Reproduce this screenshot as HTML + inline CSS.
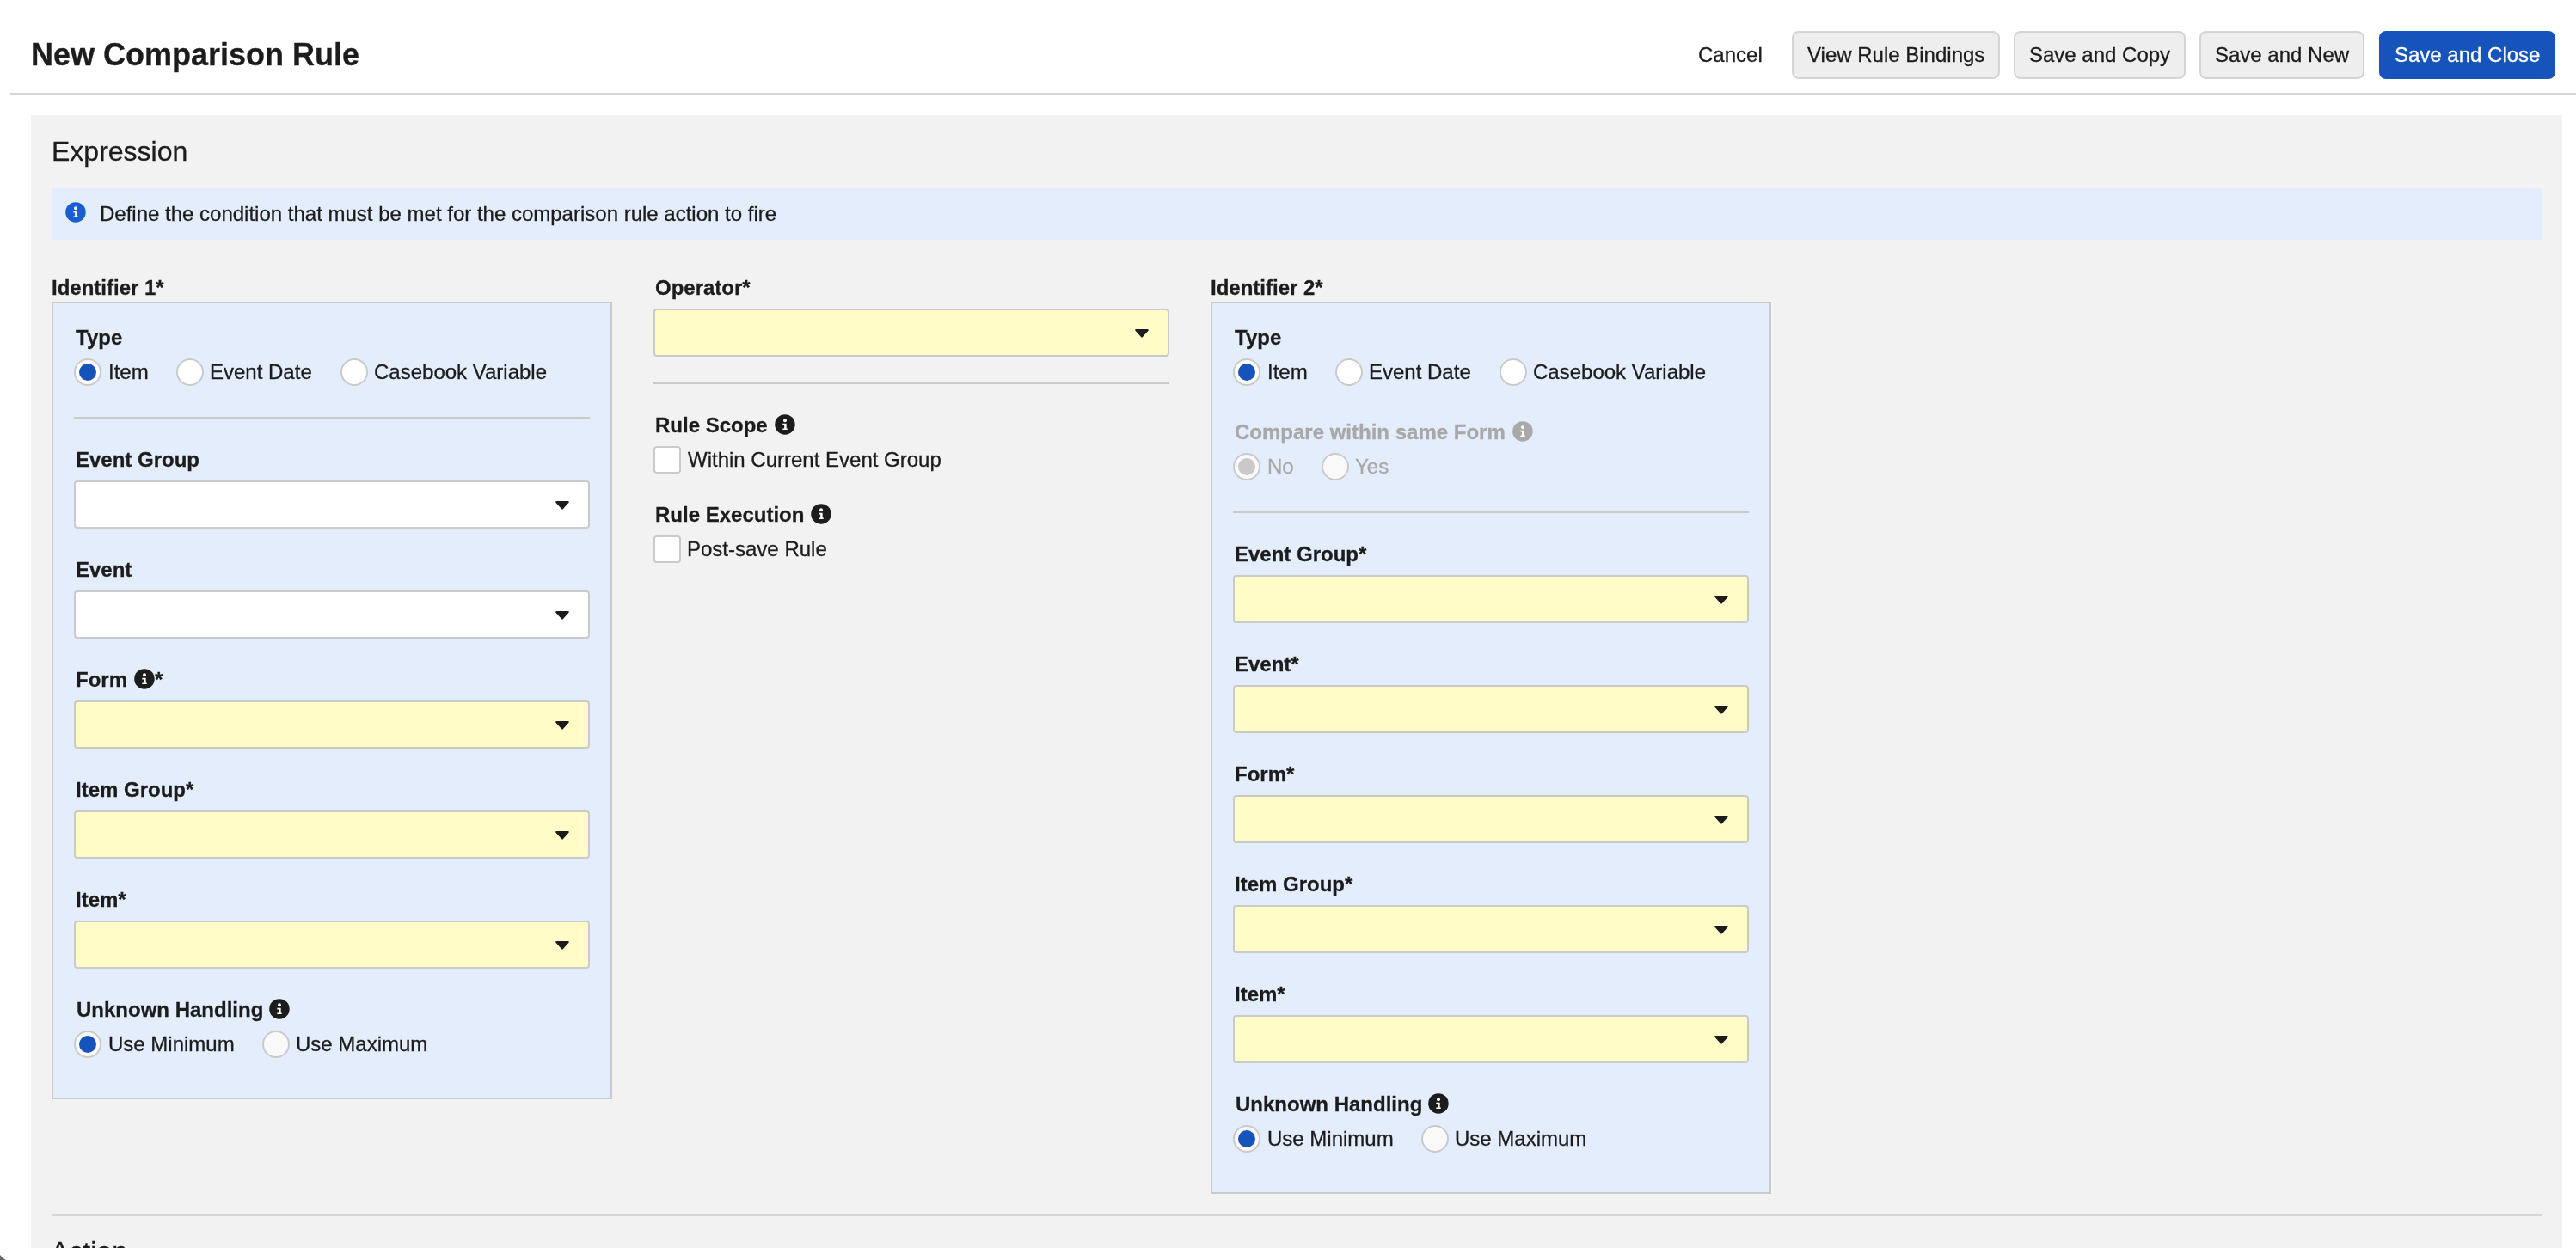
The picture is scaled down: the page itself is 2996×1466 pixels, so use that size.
<!DOCTYPE html>
<html><head><meta charset="utf-8"><title>New Comparison Rule</title>
<style>
html,body{margin:0;padding:0;}
@media (max-width:2000px){html{zoom:0.5;}}
body{width:2996px;height:1466px;position:relative;overflow:hidden;background:#fff;font-family:"Liberation Sans",sans-serif;color:#1c1c1c;}
.t{position:absolute;white-space:nowrap;will-change:transform;-webkit-text-stroke:0.3px currentColor;}
.r{position:absolute;}
.btn{position:absolute;top:36px;height:56px;box-sizing:border-box;border-radius:8px;font-size:24px;line-height:52px;text-align:center;white-space:nowrap;will-change:transform;-webkit-text-stroke:0.3px currentColor;}
</style></head><body>
<div class="t" style="left:36px;top:44px;font-size:36px;line-height:40px;font-weight:bold;">New Comparison Rule</div>
<div class="r" style="left:12px;top:108px;width:2984px;height:2px;background:#d6d6d6;"></div>
<div class="btn" style="left:2766.55px;width:205.45px;border:2px solid #1653bb;background:#1653bb;color:#fff;">Save and Close</div>
<div class="btn" style="left:2558.46px;width:192.09px;border:2px solid #d4d4d4;background:#eeeeee;color:#1c1c1c;">Save and New</div>
<div class="btn" style="left:2342.35px;width:200.11px;border:2px solid #d4d4d4;background:#eeeeee;color:#1c1c1c;">Save and Copy</div>
<div class="btn" style="left:2084.01px;width:242.34px;border:2px solid #d4d4d4;background:#eeeeee;color:#1c1c1c;">View Rule Bindings</div>
<div class="btn" style="left:1957.29px;width:110.72px;border:2px solid transparent;background:transparent;color:#1c1c1c;">Cancel</div>
<div class="r" style="left:36px;top:134px;width:2944px;height:1318px;background:#f2f2f2;"></div>
<div class="t" style="left:60px;top:156px;font-size:32px;line-height:40px;">Expression</div>
<div class="r" style="left:60px;top:219px;width:2896px;height:60px;background:#e3edfb;"></div>
<svg class="r" style="left:76px;top:235px" width="24" height="24" viewBox="0 0 24 24"><circle cx="11.94" cy="11.9" r="11.75" fill="#1a5dd5"/><circle cx="12.0" cy="7.15" r="2.0" fill="#fff"/><path d="M9.3 10.85 H13.65 V16.4 H14.75 V17.9 H9.3 V16.4 H11.15 V12.4 H9.3 Z" fill="#fff"/></svg>
<div class="t" style="left:115.5px;top:234px;font-size:24px;line-height:30px;">Define the condition that must be met for the comparison rule action to fire</div>
<div class="t" style="left:60px;top:320px;font-size:24px;line-height:30px;font-weight:bold;">Identifier 1*</div>
<div class="r" style="left:60px;top:351px;width:652px;height:928px;box-sizing:border-box;border:2px solid #cacaca;background:#e3edfb;"></div>
<div class="t" style="left:88px;top:378px;font-size:24px;line-height:30px;font-weight:bold;">Type</div>
<div class="r" style="left:86px;top:417.0px;width:32px;height:32px;box-sizing:border-box;border:2px solid #cacaca;border-radius:50%;background:#fff;"></div>
<div class="r" style="left:92.0px;top:423.0px;width:20px;height:20px;border-radius:50%;background:#1653bb;"></div>
<div class="t" style="left:126px;top:418px;font-size:24px;line-height:30px;">Item</div>
<div class="r" style="left:205px;top:417.0px;width:32px;height:32px;box-sizing:border-box;border:2px solid #cacaca;border-radius:50%;background:#fff;"></div>
<div class="t" style="left:244.2px;top:418px;font-size:24px;line-height:30px;">Event Date</div>
<div class="r" style="left:395.5px;top:417.0px;width:32px;height:32px;box-sizing:border-box;border:2px solid #cacaca;border-radius:50%;background:#fff;"></div>
<div class="t" style="left:434.5px;top:418px;font-size:24px;line-height:30px;">Casebook Variable</div>
<div class="r" style="left:86px;top:485px;width:600px;height:2px;background:#cacaca;"></div>
<div class="t" style="left:88px;top:520px;font-size:24px;line-height:30px;font-weight:bold;">Event Group</div>
<div class="r" style="left:86px;top:559px;width:600px;height:56px;box-sizing:border-box;border:2px solid #cacaca;border-radius:4px;background:#ffffff;"></div>
<svg class="r" style="left:646px;top:583px" width="16" height="10" viewBox="0 0 16 10"><path d="M1.2 1 H14.8 L8 8.6 Z" fill="#1c1c1c" stroke="#1c1c1c" stroke-width="2" stroke-linejoin="round"/></svg>
<div class="t" style="left:88px;top:648px;font-size:24px;line-height:30px;font-weight:bold;">Event</div>
<div class="r" style="left:86px;top:687px;width:600px;height:56px;box-sizing:border-box;border:2px solid #cacaca;border-radius:4px;background:#ffffff;"></div>
<svg class="r" style="left:646px;top:711px" width="16" height="10" viewBox="0 0 16 10"><path d="M1.2 1 H14.8 L8 8.6 Z" fill="#1c1c1c" stroke="#1c1c1c" stroke-width="2" stroke-linejoin="round"/></svg>
<div class="t" style="left:88px;top:776px;font-size:24px;line-height:30px;font-weight:bold;">Form</div>
<svg class="r" style="left:156px;top:778px" width="24" height="24" viewBox="0 0 24 24"><circle cx="11.94" cy="11.9" r="11.75" fill="#1c1c1c"/><circle cx="12.0" cy="7.15" r="2.0" fill="#fff"/><path d="M9.3 10.85 H13.65 V16.4 H14.75 V17.9 H9.3 V16.4 H11.15 V12.4 H9.3 Z" fill="#fff"/></svg>
<div class="t" style="left:179.5px;top:776px;font-size:24px;line-height:30px;font-weight:bold;">*</div>
<div class="r" style="left:86px;top:815px;width:600px;height:56px;box-sizing:border-box;border:2px solid #cacaca;border-radius:4px;background:#fffcc8;"></div>
<svg class="r" style="left:646px;top:839px" width="16" height="10" viewBox="0 0 16 10"><path d="M1.2 1 H14.8 L8 8.6 Z" fill="#1c1c1c" stroke="#1c1c1c" stroke-width="2" stroke-linejoin="round"/></svg>
<div class="t" style="left:88px;top:904px;font-size:24px;line-height:30px;font-weight:bold;">Item Group*</div>
<div class="r" style="left:86px;top:943px;width:600px;height:56px;box-sizing:border-box;border:2px solid #cacaca;border-radius:4px;background:#fffcc8;"></div>
<svg class="r" style="left:646px;top:967px" width="16" height="10" viewBox="0 0 16 10"><path d="M1.2 1 H14.8 L8 8.6 Z" fill="#1c1c1c" stroke="#1c1c1c" stroke-width="2" stroke-linejoin="round"/></svg>
<div class="t" style="left:88px;top:1032px;font-size:24px;line-height:30px;font-weight:bold;">Item*</div>
<div class="r" style="left:86px;top:1071px;width:600px;height:56px;box-sizing:border-box;border:2px solid #cacaca;border-radius:4px;background:#fffcc8;"></div>
<svg class="r" style="left:646px;top:1095px" width="16" height="10" viewBox="0 0 16 10"><path d="M1.2 1 H14.8 L8 8.6 Z" fill="#1c1c1c" stroke="#1c1c1c" stroke-width="2" stroke-linejoin="round"/></svg>
<div class="t" style="left:88.6px;top:1160px;font-size:24px;line-height:30px;font-weight:bold;">Unknown Handling</div>
<svg class="r" style="left:313px;top:1162px" width="24" height="24" viewBox="0 0 24 24"><circle cx="11.94" cy="11.9" r="11.75" fill="#1c1c1c"/><circle cx="12.0" cy="7.15" r="2.0" fill="#fff"/><path d="M9.3 10.85 H13.65 V16.4 H14.75 V17.9 H9.3 V16.4 H11.15 V12.4 H9.3 Z" fill="#fff"/></svg>
<div class="r" style="left:86px;top:1199.0px;width:32px;height:32px;box-sizing:border-box;border:2px solid #cacaca;border-radius:50%;background:#f9f9f9;"></div>
<div class="r" style="left:92.0px;top:1205.0px;width:20px;height:20px;border-radius:50%;background:#1653bb;"></div>
<div class="t" style="left:126px;top:1200px;font-size:24px;line-height:30px;">Use Minimum</div>
<div class="r" style="left:305px;top:1199.0px;width:32px;height:32px;box-sizing:border-box;border:2px solid #cacaca;border-radius:50%;background:#f9f9f9;"></div>
<div class="t" style="left:344px;top:1200px;font-size:24px;line-height:30px;">Use Maximum</div>
<div class="t" style="left:1408px;top:320px;font-size:24px;line-height:30px;font-weight:bold;">Identifier 2*</div>
<div class="r" style="left:1408px;top:351px;width:652px;height:1038px;box-sizing:border-box;border:2px solid #cacaca;background:#e3edfb;"></div>
<div class="t" style="left:1436px;top:378px;font-size:24px;line-height:30px;font-weight:bold;">Type</div>
<div class="r" style="left:1434px;top:417.0px;width:32px;height:32px;box-sizing:border-box;border:2px solid #cacaca;border-radius:50%;background:#fff;"></div>
<div class="r" style="left:1440.0px;top:423.0px;width:20px;height:20px;border-radius:50%;background:#1653bb;"></div>
<div class="t" style="left:1474px;top:418px;font-size:24px;line-height:30px;">Item</div>
<div class="r" style="left:1553px;top:417.0px;width:32px;height:32px;box-sizing:border-box;border:2px solid #cacaca;border-radius:50%;background:#fff;"></div>
<div class="t" style="left:1592.2px;top:418px;font-size:24px;line-height:30px;">Event Date</div>
<div class="r" style="left:1743.5px;top:417.0px;width:32px;height:32px;box-sizing:border-box;border:2px solid #cacaca;border-radius:50%;background:#fff;"></div>
<div class="t" style="left:1782.5px;top:418px;font-size:24px;line-height:30px;">Casebook Variable</div>
<div class="t" style="left:1436px;top:488px;font-size:24px;line-height:30px;font-weight:bold;color:#a8a8a8;">Compare within same Form</div>
<svg class="r" style="left:1759px;top:490px" width="24" height="24" viewBox="0 0 24 24"><circle cx="11.94" cy="11.9" r="11.75" fill="#a9a9a9"/><circle cx="12.0" cy="7.15" r="2.0" fill="#fff"/><path d="M9.3 10.85 H13.65 V16.4 H14.75 V17.9 H9.3 V16.4 H11.15 V12.4 H9.3 Z" fill="#fff"/></svg>
<div class="r" style="left:1434px;top:527.0px;width:32px;height:32px;box-sizing:border-box;border:2px solid #cacaca;border-radius:50%;background:#f9f9f9;"></div>
<div class="r" style="left:1440.0px;top:533.0px;width:20px;height:20px;border-radius:50%;background:#c9c9c9;"></div>
<div class="t" style="left:1474px;top:528px;font-size:24px;line-height:30px;color:#a8a8a8;">No</div>
<div class="r" style="left:1537px;top:527.0px;width:32px;height:32px;box-sizing:border-box;border:2px solid #cacaca;border-radius:50%;background:#f9f9f9;"></div>
<div class="t" style="left:1576px;top:528px;font-size:24px;line-height:30px;color:#a8a8a8;">Yes</div>
<div class="r" style="left:1434px;top:595px;width:600px;height:2px;background:#cacaca;"></div>
<div class="t" style="left:1436px;top:630px;font-size:24px;line-height:30px;font-weight:bold;">Event Group*</div>
<div class="r" style="left:1434px;top:669px;width:600px;height:56px;box-sizing:border-box;border:2px solid #cacaca;border-radius:4px;background:#fffcc8;"></div>
<svg class="r" style="left:1994px;top:693px" width="16" height="10" viewBox="0 0 16 10"><path d="M1.2 1 H14.8 L8 8.6 Z" fill="#1c1c1c" stroke="#1c1c1c" stroke-width="2" stroke-linejoin="round"/></svg>
<div class="t" style="left:1436px;top:758px;font-size:24px;line-height:30px;font-weight:bold;">Event*</div>
<div class="r" style="left:1434px;top:797px;width:600px;height:56px;box-sizing:border-box;border:2px solid #cacaca;border-radius:4px;background:#fffcc8;"></div>
<svg class="r" style="left:1994px;top:821px" width="16" height="10" viewBox="0 0 16 10"><path d="M1.2 1 H14.8 L8 8.6 Z" fill="#1c1c1c" stroke="#1c1c1c" stroke-width="2" stroke-linejoin="round"/></svg>
<div class="t" style="left:1436px;top:886px;font-size:24px;line-height:30px;font-weight:bold;">Form*</div>
<div class="r" style="left:1434px;top:925px;width:600px;height:56px;box-sizing:border-box;border:2px solid #cacaca;border-radius:4px;background:#fffcc8;"></div>
<svg class="r" style="left:1994px;top:949px" width="16" height="10" viewBox="0 0 16 10"><path d="M1.2 1 H14.8 L8 8.6 Z" fill="#1c1c1c" stroke="#1c1c1c" stroke-width="2" stroke-linejoin="round"/></svg>
<div class="t" style="left:1436px;top:1014px;font-size:24px;line-height:30px;font-weight:bold;">Item Group*</div>
<div class="r" style="left:1434px;top:1053px;width:600px;height:56px;box-sizing:border-box;border:2px solid #cacaca;border-radius:4px;background:#fffcc8;"></div>
<svg class="r" style="left:1994px;top:1077px" width="16" height="10" viewBox="0 0 16 10"><path d="M1.2 1 H14.8 L8 8.6 Z" fill="#1c1c1c" stroke="#1c1c1c" stroke-width="2" stroke-linejoin="round"/></svg>
<div class="t" style="left:1436px;top:1142px;font-size:24px;line-height:30px;font-weight:bold;">Item*</div>
<div class="r" style="left:1434px;top:1181px;width:600px;height:56px;box-sizing:border-box;border:2px solid #cacaca;border-radius:4px;background:#fffcc8;"></div>
<svg class="r" style="left:1994px;top:1205px" width="16" height="10" viewBox="0 0 16 10"><path d="M1.2 1 H14.8 L8 8.6 Z" fill="#1c1c1c" stroke="#1c1c1c" stroke-width="2" stroke-linejoin="round"/></svg>
<div class="t" style="left:1436.6px;top:1270px;font-size:24px;line-height:30px;font-weight:bold;">Unknown Handling</div>
<svg class="r" style="left:1661px;top:1272px" width="24" height="24" viewBox="0 0 24 24"><circle cx="11.94" cy="11.9" r="11.75" fill="#1c1c1c"/><circle cx="12.0" cy="7.15" r="2.0" fill="#fff"/><path d="M9.3 10.85 H13.65 V16.4 H14.75 V17.9 H9.3 V16.4 H11.15 V12.4 H9.3 Z" fill="#fff"/></svg>
<div class="r" style="left:1434px;top:1309.0px;width:32px;height:32px;box-sizing:border-box;border:2px solid #cacaca;border-radius:50%;background:#f9f9f9;"></div>
<div class="r" style="left:1440.0px;top:1315.0px;width:20px;height:20px;border-radius:50%;background:#1653bb;"></div>
<div class="t" style="left:1474px;top:1310px;font-size:24px;line-height:30px;">Use Minimum</div>
<div class="r" style="left:1653px;top:1309.0px;width:32px;height:32px;box-sizing:border-box;border:2px solid #cacaca;border-radius:50%;background:#f9f9f9;"></div>
<div class="t" style="left:1692px;top:1310px;font-size:24px;line-height:30px;">Use Maximum</div>
<div class="t" style="left:761.6px;top:320px;font-size:24px;line-height:30px;font-weight:bold;">Operator*</div>
<div class="r" style="left:760px;top:359px;width:600px;height:56px;box-sizing:border-box;border:2px solid #cacaca;border-radius:4px;background:#fffcc8;"></div>
<svg class="r" style="left:1320px;top:383px" width="16" height="10" viewBox="0 0 16 10"><path d="M1.2 1 H14.8 L8 8.6 Z" fill="#1c1c1c" stroke="#1c1c1c" stroke-width="2" stroke-linejoin="round"/></svg>
<div class="r" style="left:760px;top:445px;width:600px;height:2px;background:#cacaca;"></div>
<div class="t" style="left:761.5px;top:480px;font-size:24px;line-height:30px;font-weight:bold;">Rule Scope</div>
<svg class="r" style="left:901px;top:482px" width="24" height="24" viewBox="0 0 24 24"><circle cx="11.94" cy="11.9" r="11.75" fill="#1c1c1c"/><circle cx="12.0" cy="7.15" r="2.0" fill="#fff"/><path d="M9.3 10.85 H13.65 V16.4 H14.75 V17.9 H9.3 V16.4 H11.15 V12.4 H9.3 Z" fill="#fff"/></svg>
<div class="r" style="left:760px;top:519.0px;width:32px;height:32px;box-sizing:border-box;border:2px solid #cacaca;border-radius:4px;background:#fff;"></div>
<div class="t" style="left:800px;top:520px;font-size:24px;line-height:30px;">Within Current Event Group</div>
<div class="t" style="left:761.5px;top:584px;font-size:24px;line-height:30px;font-weight:bold;">Rule Execution</div>
<svg class="r" style="left:943px;top:586px" width="24" height="24" viewBox="0 0 24 24"><circle cx="11.94" cy="11.9" r="11.75" fill="#1c1c1c"/><circle cx="12.0" cy="7.15" r="2.0" fill="#fff"/><path d="M9.3 10.85 H13.65 V16.4 H14.75 V17.9 H9.3 V16.4 H11.15 V12.4 H9.3 Z" fill="#fff"/></svg>
<div class="r" style="left:760px;top:623.0px;width:32px;height:32px;box-sizing:border-box;border:2px solid #cacaca;border-radius:4px;background:#fff;"></div>
<div class="t" style="left:799px;top:624px;font-size:24px;line-height:30px;">Post-save Rule</div>
<div class="r" style="left:60px;top:1413px;width:2896px;height:2px;background:#d6d6d6;"></div>
<div class="r" style="left:36px;top:1380px;width:2944px;height:72px;overflow:hidden">
<div class="t" style="left:23px;top:1435.5px;font-size:32px;line-height:40px;margin-top:-1380px">Action</div>
</div>
<svg class="r" style="left:0;top:1446px" width="20" height="20" viewBox="0 0 20 20"><path d="M0 14 Q3 18 7 20 L0 20 Z" fill="#6a6a6a"/></svg>
</body></html>
